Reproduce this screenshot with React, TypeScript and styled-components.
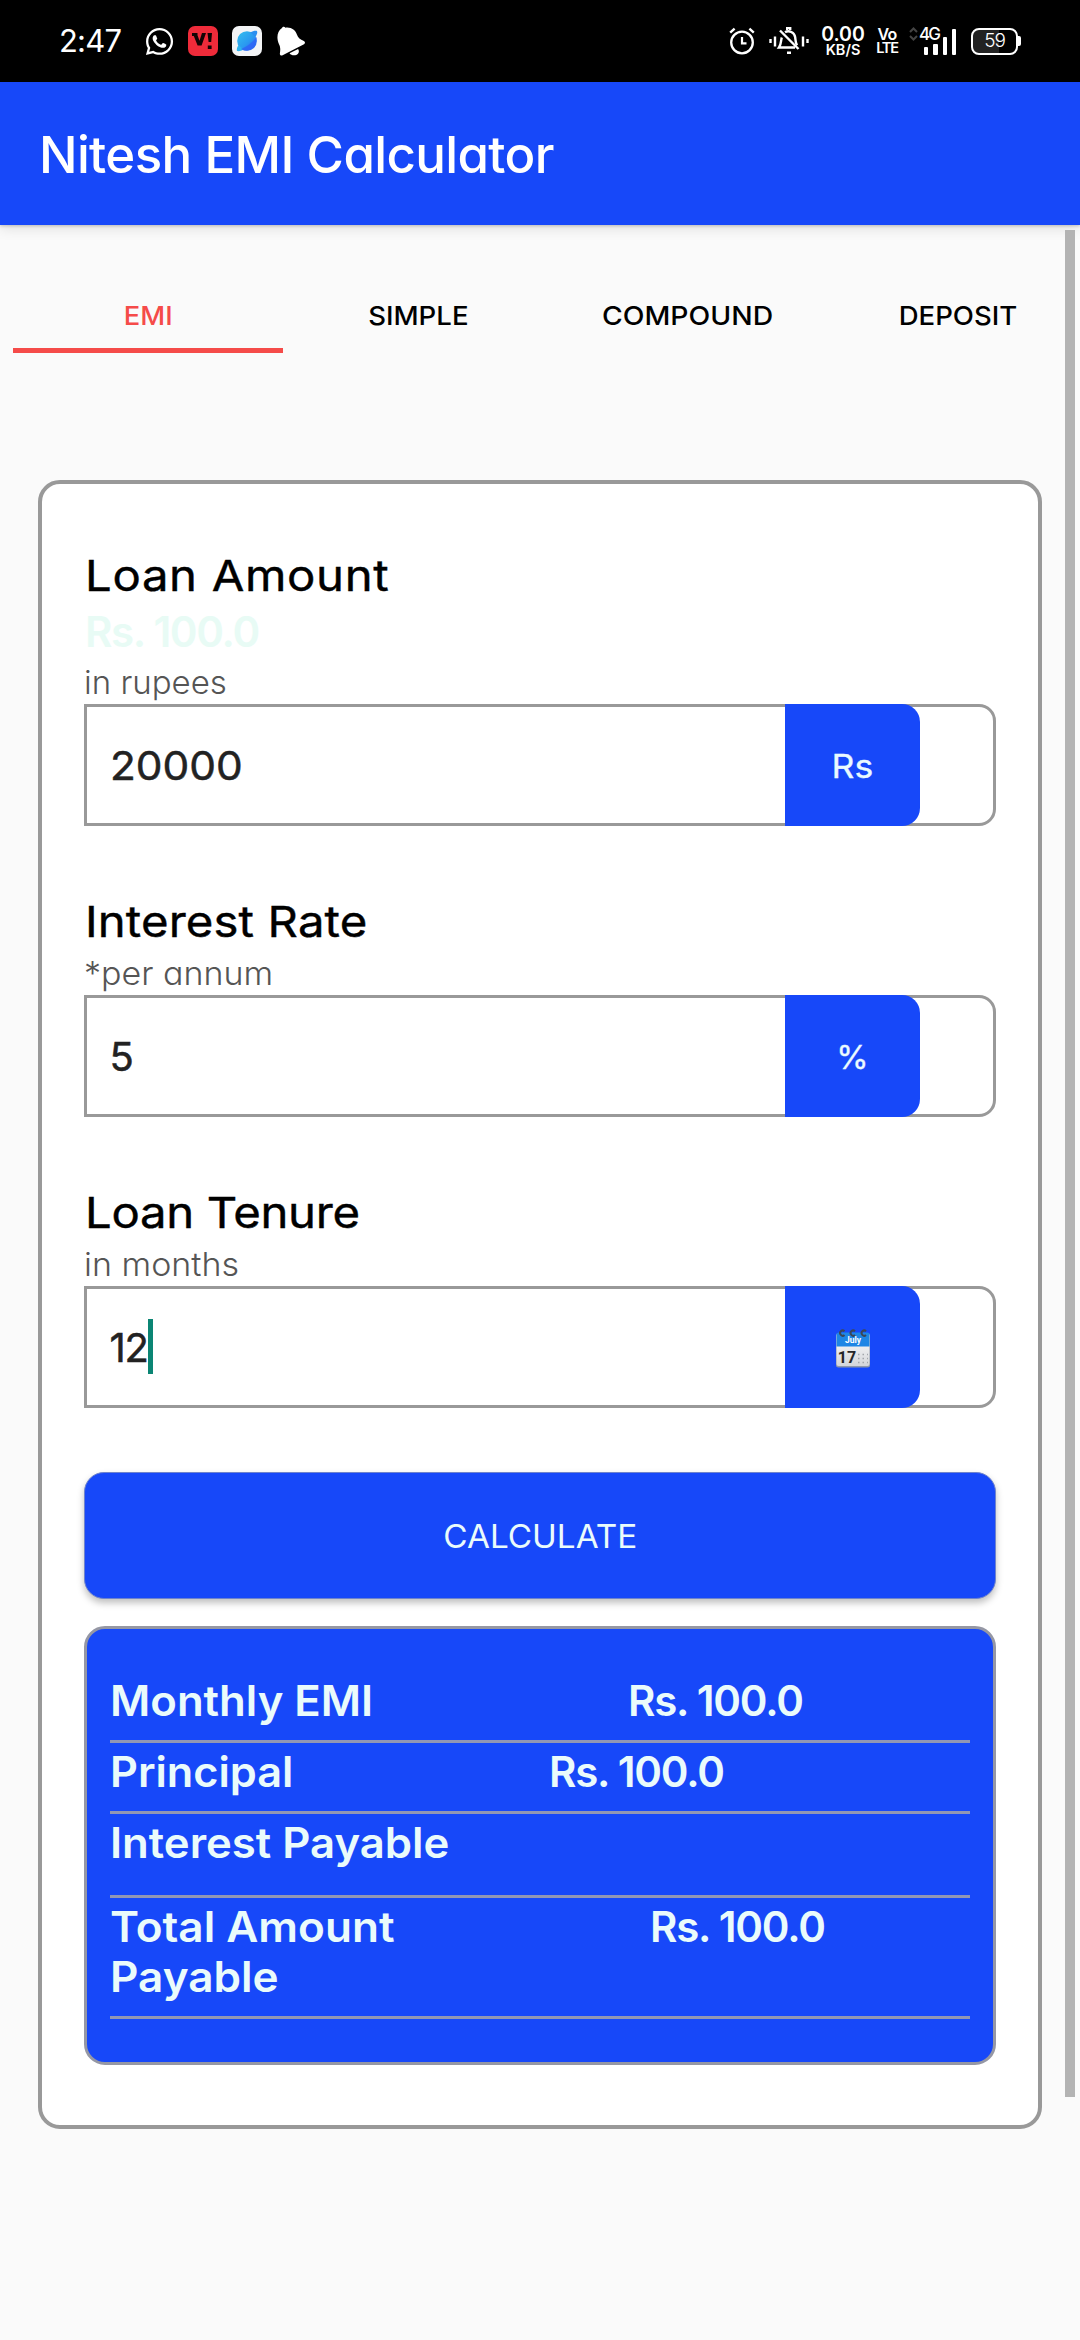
import React from "react";
import styled, { createGlobalStyle } from "styled-components";
import { FaWhatsapp } from "react-icons/fa";

const blue = "#1748f9";
const grey = "#999999";
const ice = "#eafbfb";

const GlobalStyle = createGlobalStyle`
  *, *::before, *::after { box-sizing: border-box; }
  body {
    margin: 0;
    background: #fafafa;
    font-family: Inter, "Liberation Sans", sans-serif;
    -webkit-font-smoothing: antialiased;
  }
  svg { display: block; flex: none; }
`;

const Screen = styled.div`
  position: relative;
  display: flex;
  flex-direction: column;
  width: 1080px;
  height: 2340px;
  overflow: hidden;
  background: #fafafa;
`;

/* Widens the letterforms of a single run of text. */
const Wide = styled.span<{ $x: number; $center?: boolean }>`
  display: inline-block;
  transform: scaleX(${(p) => p.$x});
  transform-origin: ${(p) => (p.$center ? "center" : "left")};
  white-space: nowrap;
`;

const StatusBar = styled.header`
  display: flex;
  justify-content: space-between;
  height: 82px;
  padding: 0 59px;
  background: #000;
  color: #fff;
`;

const StatusGroup = styled.div`
  display: flex;
  align-items: center;
  height: 82px;
`;

const Clock = styled.span`
  width: 84px;
  font-size: 31px;
  line-height: 40px;
  letter-spacing: -0.8px;
`;

const Spacer = styled.span<{ $w: number }>`
  flex: none;
  width: ${(p) => p.$w}px;
`;

const StackedLabel = styled.div<{ $w: number }>`
  display: flex;
  flex-direction: column;
  align-items: center;
  flex: none;
  width: ${(p) => p.$w}px;
  white-space: nowrap;
`;

const StackedLine = styled.span<{ $size: number; $line: number; $track?: number }>`
  font-size: ${(p) => p.$size}px;
  font-weight: 600;
  line-height: ${(p) => p.$line}px;
  letter-spacing: ${(p) => p.$track ?? 0}px;
`;

const Signal = styled.div`
  display: grid;
  grid-template-columns: 10px 37px;
  flex: none;
  width: 47px;
  height: 28px;
`;

const SignalLabel = styled.span`
  grid-area: 1 / 2;
  font-size: 17px;
  font-weight: 500;
  line-height: 14px;
  letter-spacing: -2px;
`;

const SignalBars = styled.div`
  grid-area: 1 / 2;
  display: flex;
  align-items: flex-end;
  gap: 5px;
  padding-left: 5px;
`;

const SignalBar = styled.span<{ $h: number }>`
  width: 4.3px;
  height: ${(p) => p.$h}px;
  border-radius: 1px;
  background: #fff;
`;

const Battery = styled.div`
  display: flex;
  align-items: center;
  flex: none;
`;

const BatteryBody = styled.div`
  width: 47px;
  height: 27px;
  border: 2.4px solid #fff;
  border-radius: 8px;
  background: linear-gradient(90deg, #222 60%, #000 60%);
  font-size: 19px;
  font-weight: 300;
  line-height: 22px;
  letter-spacing: -1.2px;
  text-align: center;
`;

const BatteryTip = styled.span`
  width: 3px;
  height: 10px;
  background: #fff;
  border-radius: 0 2px 2px 0;
`;

const AppBar = styled.div`
  display: flex;
  align-items: center;
  flex: none;
  height: 143px;
  padding: 2px 0 0 39px;
  background: ${blue};
  box-shadow: 0 1px 3px rgba(0, 0, 0, 0.2), 0 4px 12px rgba(0, 0, 0, 0.1);
`;

const Title = styled.h1`
  margin: 0;
  color: #fff;
  font-size: 51px;
  font-weight: 500;
  line-height: 64px;
  letter-spacing: -0.65px;
  font-feature-settings: "cv11";
  white-space: nowrap;
`;

const Tabs = styled.nav`
  display: flex;
  flex: none;
  height: 127px;
  padding: 0 0 0 13px;
  margin-top: 1px;
`;

const Tab = styled.div<{ $active?: boolean }>`
  display: flex;
  align-items: center;
  justify-content: center;
  flex: none;
  width: 270px;
  height: 127px;
  padding-top: 57px;
  color: ${(p) => (p.$active ? "#f54b49" : "#000")};
  border-bottom: 5px solid ${(p) => (p.$active ? "#f54b49" : "transparent")};
  font-size: 26px;
  font-weight: 500;
  line-height: 30px;
`;

const ScrollThumb = styled.div`
  position: absolute;
  top: 230px;
  right: 5px;
  width: 10px;
  height: 1867px;
  background: #b3b3b3;
`;

const Card = styled.main`
  display: flex;
  flex-direction: column;
  flex: none;
  width: 1004px;
  height: 1649px;
  margin: 127px 0 0 38px;
  padding: 66px 42px 0;
  background: #fff;
  border: 4px solid ${grey};
  border-radius: 22px;
`;

const Field = styled.section`
  display: flex;
  flex-direction: column;
  & + & { margin-top: 70px; }
`;

const FieldLabel = styled.label<{ $track: number }>`
  padding-left: 1px;
  color: #000;
  font-size: 43px;
  font-weight: 400;
  -webkit-text-stroke: 0.4px #000;
  line-height: 50px;
  height: 51px;
  letter-spacing: ${(p) => p.$track}px;
`;

const Amount = styled.span`
  padding-left: 1px;
  height: 62px;
  color: #e8fbf5;
  font-size: 42px;
  font-weight: 600;
  line-height: 62px;
  letter-spacing: -1.3px;
`;

const Hint = styled.span<{ $gap: number; $track: number }>`
  margin: ${(p) => p.$gap}px 0 3px;
  color: #555;
  font-size: 33px;
  font-weight: 300;
  line-height: 38px;
  letter-spacing: ${(p) => p.$track}px;
  font-feature-settings: "cv11";
`;

const InputRow = styled.div`
  display: flex;
  height: 122px;
  background: #fff;
  border: 3px solid ${grey};
  border-radius: 0 17px 17px 0;
`;

const InputValue = styled.div<{ $track: number }>`
  display: flex;
  align-items: center;
  width: 698px;
  padding-left: 22.5px;
  color: #222;
  font-size: 40px;
  font-weight: 400;
  -webkit-text-stroke: 0.5px #222;
  letter-spacing: ${(p) => p.$track}px;
`;

const Caret = styled.span`
  width: 5px;
  height: 55px;
  margin-top: -1px;
  background: #0b8574;
`;

const Unit = styled.div`
  display: flex;
  align-items: center;
  justify-content: center;
  width: 135px;
  height: 122px;
  margin: -3px 0;
  padding-top: 2px;
  background: ${blue};
  border-radius: 0 18px 18px 0;
  color: #eafaff;
  font-size: 33px;
  font-weight: 400;
  -webkit-text-stroke: 0.3px #eafaff;
`;

const CalculateButton = styled.button`
  flex: none;
  width: 912px;
  height: 127px;
  margin: 64px 0 27px;
  padding: 2px 0 0;
  background: ${blue};
  border: 1px solid #6f84cc;
  border-radius: 20px;
  box-shadow: 0 4px 7px rgba(0, 0, 0, 0.25);
  color: ${ice};
  font-family: inherit;
  font-size: 32px;
  font-weight: 400;
`;

const Results = styled.section`
  display: flex;
  flex-direction: column;
  flex: none;
  height: 439px;
  padding: 43px 23px 0;
  background: ${blue};
  border: 3px solid #9597a4;
  border-radius: 21px;
`;

const ResultRow = styled.div<{ $h: number }>`
  display: flex;
  height: ${(p) => p.$h}px;
  padding-top: 4px;
  border-bottom: 3px solid #9297b4;
  color: ${ice};
  font-size: 42px;
  font-weight: 600;
  line-height: 50px;
`;

const ResultName = styled.span<{ $w: number }>`
  flex: none;
  width: ${(p) => p.$w}px;
`;

const ResultValue = styled.span`
  letter-spacing: -1.2px;
  white-space: nowrap;
`;

const ViIcon = () => (
  <svg width="30" height="30" viewBox="0 0 30 30">
    <rect width="30" height="30" rx="7" fill="#ef2b3a" />
    <path d="M4 7h5.5v2.2l2 5.6L14 7h4l-4.4 12.5H9.6L5.8 10H4zM19.5 7H24l-.8 9h-2.6zM19.8 19.5h3.8V23h-3.8z" fill="#120405" />
  </svg>
);

const BrowserIcon = () => (
  <svg width="30" height="30" viewBox="0 0 30 30">
    <defs>
      <linearGradient id="planet" x1="0" y1="0" x2="1" y2="1">
        <stop offset="0" stopColor="#35c0ee" />
        <stop offset="0.55" stopColor="#2a9af0" />
        <stop offset="1" stopColor="#2f55f5" />
      </linearGradient>
    </defs>
    <rect width="30" height="30" rx="7" fill="#f3f4f6" />
    <circle cx="15" cy="15" r="9.8" fill="url(#planet)" />
    <path d="M5 25c-.6-2 .3-4 1.500-6l5 4.500c-2 1.200-4.500 2-6.500 1.500z" fill="#2fb4ee" />
    <path d="M25 5c.6 2-.3 4-1.500 6l-5-4.500c2-1.200 4.500-2 6.500-1.500z" fill="#2a8ff0" />
    <path d="M9 23C15 21 21 16 24.600 11c1 6-3 13-10 13.800-2.200.1-4-.6-5.600-1.800z" fill="#2f62f6" opacity=".75" />
  </svg>
);

const BellIcon = () => (
  <svg width="30" height="30" viewBox="0 0 30 30">
    <path d="M5 2C5.500.6 7.600.4 8.400 1.700 14 .8 18.500 4 20 8.800c1 3.200 3.200 4.600 6.800 6.100 1.600.8 1.500 2.500.2 3.400L5.600 29.300c-1.700.8-3-.2-2.700-2 .5-3.800.7-6-.9-9C-.6 12.400-.2 5.500 5 2z" fill="#fff" />
    <path d="M12.500 27.300l8.600-4.400c1.600 2.300.6 5-1.800 6-2.400.9-5.200.5-6.800-1.600z" fill="#fff" />
  </svg>
);

const AlarmIcon = () => (
  <svg width="26" height="28" viewBox="0 0 26 28" fill="none" stroke="#fff">
    <circle cx="13" cy="15.500" r="10.800" strokeWidth="2.300" />
    <path d="M13 10v6.300h4.500" strokeWidth="2.200" />
    <path d="M1.200 5.600L5.600 1.600M24.800 5.600L20.400 1.600" strokeWidth="2.400" />
  </svg>
);

const SilentBellIcon = () => (
  <svg width="40" height="28" viewBox="0 0 40 28" fill="none" stroke="#fff" strokeWidth="2.400">
    <path d="M1.500 12v4M6 9.500v10M34 9.500v10M38.500 12v4" />
    <path d="M12.800 10.500c-1 2.500-.4 6.500-2.800 10h16M16 5.300c4-2.600 9.500.2 10.200 5 .3 3 .3 5.700 1.800 8" />
    <path d="M11 3.500L29.500 22" />
    <path d="M18.200 3V.8h3V3M18 25.800h4" />
  </svg>
);

const DataArrows = () => (
  <svg width="9" height="14" viewBox="0 0 9 14" fill="none" stroke="#444" strokeWidth="2">
    <path d="M1 5l3.500-3.500L8 5M1 9l3.500 3.500L8 9" />
  </svg>
);

const CalendarIcon = () => (
  <svg width="36" height="39" viewBox="0 0 36 39">
    <defs>
      <linearGradient id="page" x1="0" y1="0" x2="0" y2="1">
        <stop offset="0" stopColor="#fff" />
        <stop offset="1" stopColor="#d4d6da" />
      </linearGradient>
    </defs>
    <rect x="1" y="5" width="34" height="33.500" rx="2.500" fill="#8e98ab" />
    <rect x="1.500" y="4" width="33" height="33" rx="2" fill="url(#page)" />
    <path d="M1.500 17.500V5.500a2 2 0 0 1 2-2h29a2 2 0 0 1 2 2v12z" fill="#1e86e5" />
    <g fill="none" stroke="#3b4656" strokeWidth="2">
      <path d="M9.500 2.200a2.600 2.600 0 1 0 0 3.800M20 2.200a2.600 2.600 0 1 0 0 3.800M31 2.200a2.600 2.600 0 1 0 0 3.800" />
    </g>
    <text x="18" y="14" textAnchor="middle" fontFamily="Roboto, sans-serif" fontWeight="700" fontSize="8.500" fill="#fff" stroke="none">July</text>
    <text x="2.800" y="33.500" fontFamily="Roboto, sans-serif" fontWeight="700" fontSize="16" fill="#262626" stroke="none">17</text>
    <g stroke="#a3a6ab" strokeWidth="1.500" strokeDasharray="1.500 3">
      <path d="M23 25.500h10M23 29.500h10M23 33.500h10" />
    </g>
  </svg>
);

export default function App() {
  return (
    <>
      <GlobalStyle />
      <Screen>
        <StatusBar>
          <StatusGroup>
            <Clock>2:47</Clock>
            <Spacer $w={1} />
            <FaWhatsapp size={31} color="#fff" />
            <Spacer $w={13} />
            <ViIcon />
            <Spacer $w={14} />
            <BrowserIcon />
            <Spacer $w={15} />
            <BellIcon />
          </StatusGroup>
          <StatusGroup>
            <AlarmIcon />
            <Spacer $w={14} />
            <SilentBellIcon />
            <Spacer $w={12} />
            <StackedLabel $w={44}>
              <StackedLine $size={19.5} $line={17}>0.00</StackedLine>
              <StackedLine $size={14.5} $line={13}>KB/S</StackedLine>
            </StackedLabel>
            <Spacer $w={12} />
            <StackedLabel $w={20}>
              <StackedLine $size={16} $line={13} $track={-0.8}>Vo</StackedLine>
              <StackedLine $size={14.5} $line={13} $track={-1.2}>LTE</StackedLine>
            </StackedLabel>
            <Spacer $w={12} />
            <Signal>
              <DataArrows />
              <SignalLabel>4G</SignalLabel>
              <SignalBars>
                <SignalBar $h={8} />
                <SignalBar $h={11} />
                <SignalBar $h={18} />
                <SignalBar $h={26} />
              </SignalBars>
            </Signal>
            <Spacer $w={15} />
            <Battery>
              <BatteryBody>59</BatteryBody>
              <BatteryTip />
            </Battery>
          </StatusGroup>
        </StatusBar>

        <AppBar>
          <Title>Nitesh EMI Calculator</Title>
        </AppBar>

        <Tabs>
          <Tab $active><Wide $x={1.05} $center>EMI</Wide></Tab>
          <Tab><Wide $x={1.06} $center>SIMPLE</Wide></Tab>
          <Tab><Wide $x={1.09} $center>COMPOUND</Wide></Tab>
          <Tab><Wide $x={1.06} $center>DEPOSIT</Wide></Tab>
        </Tabs>

        <Card>
          <Field>
            <FieldLabel $track={0.6}><Wide $x={1.1}>Loan Amount</Wide></FieldLabel>
            <Amount>Rs. 100.0</Amount>
            <Hint $gap={0} $track={0}>in rupees</Hint>
            <InputRow>
              <InputValue $track={0}><Wide $x={1.06}>20000</Wide></InputValue>
              <Unit><Wide $x={1.08} $center>Rs</Wide></Unit>
            </InputRow>
          </Field>
          <Field>
            <FieldLabel $track={0.1}><Wide $x={1.1}>Interest Rate</Wide></FieldLabel>
            <Hint $gap={7} $track={0}><Wide $x={1.03}>*per annum</Wide></Hint>
            <InputRow>
              <InputValue $track={0}>5</InputValue>
              <Unit>%</Unit>
            </InputRow>
          </Field>
          <Field>
            <FieldLabel $track={-0.3}><Wide $x={1.1}>Loan Tenure</Wide></FieldLabel>
            <Hint $gap={7} $track={0}><Wide $x={1.03}>in months</Wide></Hint>
            <InputRow>
              <InputValue $track={-1.2}>12<Caret /></InputValue>
              <Unit><CalendarIcon /></Unit>
            </InputRow>
          </Field>

          <CalculateButton><Wide $x={1.04} $center>CALCULATE</Wide></CalculateButton>

          <Results>
            <ResultRow $h={71}>
              <ResultName $w={518}><Wide $x={1.04}>Monthly EMI</Wide></ResultName>
              <ResultValue>Rs. 100.0</ResultValue>
            </ResultRow>
            <ResultRow $h={71}>
              <ResultName $w={439}><Wide $x={1.03}>Principal</Wide></ResultName>
              <ResultValue>Rs. 100.0</ResultValue>
            </ResultRow>
            <ResultRow $h={84}>
              <ResultName $w={518}><Wide $x={1.04}>Interest Payable</Wide></ResultName>
            </ResultRow>
            <ResultRow $h={121}>
              <ResultName $w={540}><Wide $x={1.05}>Total Amount<br />Payable</Wide></ResultName>
              <ResultValue>Rs. 100.0</ResultValue>
            </ResultRow>
          </Results>
        </Card>
        <ScrollThumb />
      </Screen>
    </>
  );
}
